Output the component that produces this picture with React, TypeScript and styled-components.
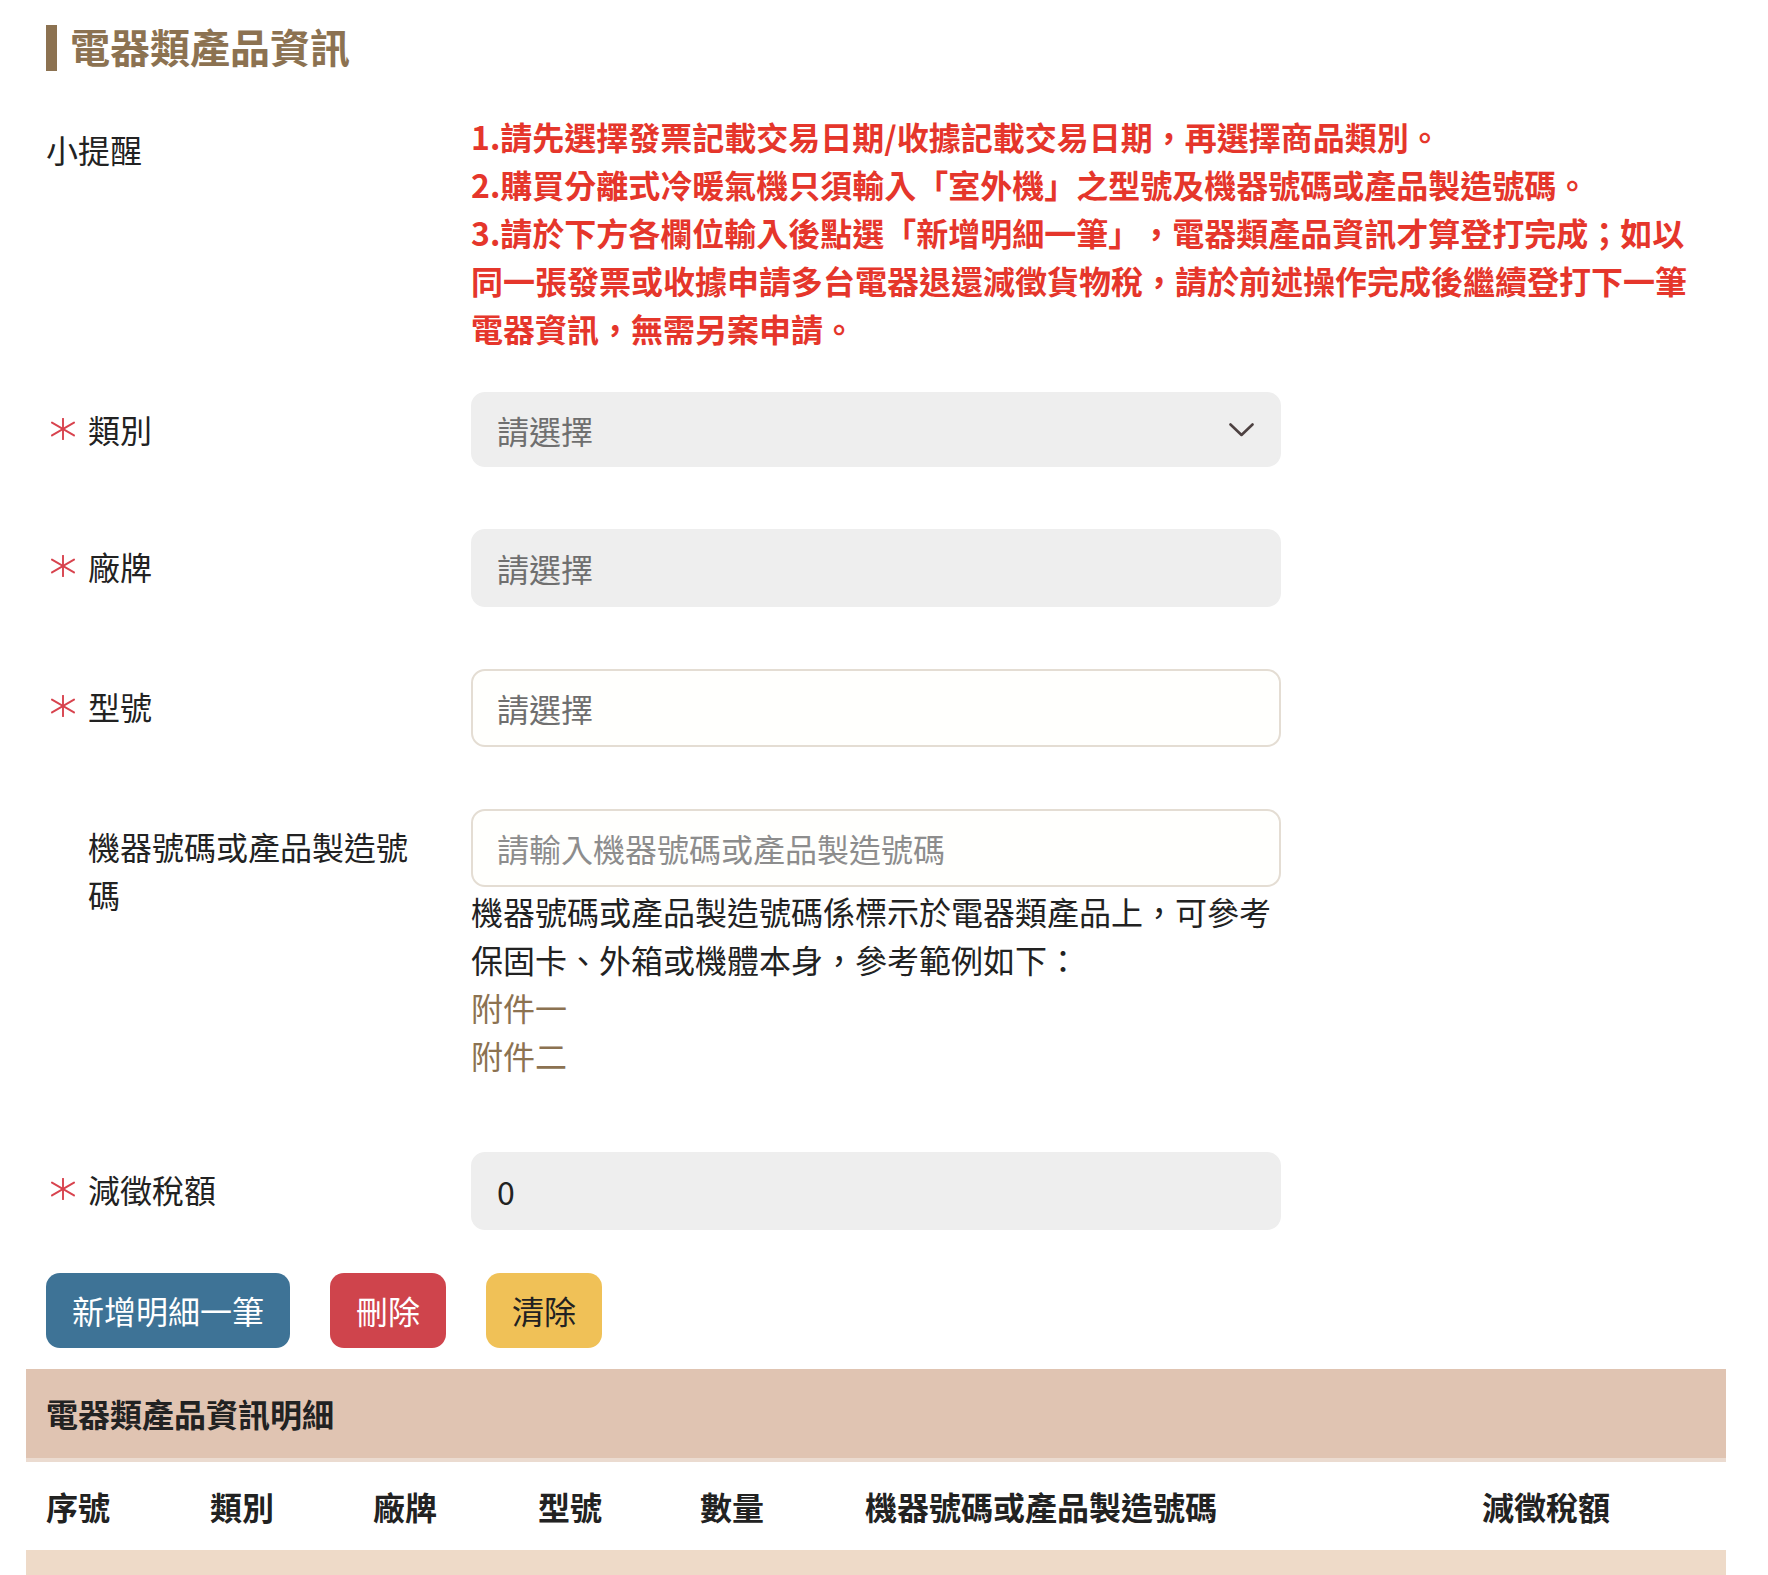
import React from "react";
import styled, { createGlobalStyle } from "styled-components";

const GlobalStyle = createGlobalStyle`
  html, body { margin: 0; padding: 0; background: #ffffff; }
  body {
    font-family: "Noto Sans CJK TC", "Noto Sans", sans-serif;
    color: #222222;
    text-spacing-trim: space-all;
  }
  *, *::before, *::after { box-sizing: border-box; }
`;

const BROWN = "#8c7251";

const Page = styled.div`
  padding: 25px 42px 0 26px;
`;

const FormArea = styled.div`
  padding-left: 20px;
`;

const Title = styled.h2`
  margin: 0;
  height: 46px;
  line-height: 42px;
  font-size: 40px;
  font-weight: 700;
  color: ${BROWN};
  border-left: 11px solid ${BROWN};
  padding-left: 13px;
`;

const Row = styled.div<{ $mt?: number; $mb?: number }>`
  display: grid;
  grid-template-columns: 425px 1fr;
  margin-top: ${(p) => p.$mt ?? 0}px;
  margin-bottom: ${(p) => p.$mb ?? 0}px;
`;

const Label = styled.div`
  display: flex;
  align-items: flex-start;
  padding-top: 13px;
  padding-right: 45px;
  font-size: 32px;
  line-height: 48px;
  color: #222222;
`;

const Marker = styled.span`
  flex: 0 0 42px;
  height: 48px;
  display: flex;
  align-items: center;
  padding-left: 5px;
`;

const Tips = styled.div`
  max-width: 1230px;
  color: #e5362b;
  font-weight: 700;
  font-size: 32px;
  line-height: 48px;
`;

const TipLine = styled.p`
  margin: 0;
`;

const FieldList = styled.div`
  display: flex;
  flex-direction: column;
  gap: 62px;
`;

const Field = styled.div`
  width: 810px;
`;

const inputBase = `
  width: 100%;
  border-radius: 14px;
  font-family: inherit;
  font-size: 32px;
  padding: 0 24px;
  outline: none;
  color: #222222;
`;

const TextInput = styled.input<{ $variant: "filled" | "outlined"; $hint?: string }>`
  ${inputBase}
  display: block;
  height: 78px;
  border: 2px solid ${(p) => (p.$variant === "filled" ? "#eeeeee" : "#e4ddd3")};
  background: ${(p) => (p.$variant === "filled" ? "#eeeeee" : "#fffffd")};
  &::placeholder {
    color: ${(p) => p.$hint ?? "#6f6f6f"};
    opacity: 1;
  }
`;

const SelectWrap = styled.div`
  position: relative;
  width: 100%;
`;

const Select = styled.select`
  ${inputBase}
  display: block;
  height: 75px;
  appearance: none;
  -webkit-appearance: none;
  border: 2px solid #eeeeee;
  background: #eeeeee;
  color: #6f6f6f;
  padding-right: 70px;
`;

const Chevron = styled.svg`
  position: absolute;
  right: 27px;
  top: 50%;
  transform: translateY(-50%);
  pointer-events: none;
`;

const Help = styled.div`
  padding-bottom: 11px;
  font-size: 32px;
  line-height: 48px;
  color: #222222;
`;

const HelpLink = styled.a`
  display: block;
  color: ${BROWN};
  text-decoration: none;
`;

const ButtonBar = styled.div`
  display: flex;
  gap: 40px;
  margin-top: 43px;
`;

const Button = styled.button<{ $tone: "blue" | "red" | "yellow" }>`
  height: 75px;
  padding: 0 26px;
  border: none;
  border-radius: 14px;
  font-family: inherit;
  font-size: 32px;
  line-height: 75px;
  cursor: pointer;
  background: ${(p) =>
    p.$tone === "blue" ? "#3e7396" : p.$tone === "red" ? "#cf444c" : "#f0c157"};
  color: ${(p) => (p.$tone === "yellow" ? "#222222" : "#ffffff")};
`;

const TableSection = styled.section`
  margin-top: 21px;
`;

const TableTitle = styled.div`
  height: 93px;
  padding-left: 20px;
  line-height: 89px;
  font-size: 32px;
  font-weight: 700;
  color: #222222;
  background: #e0c4b2;
  border-bottom: 4px solid #ebdbd0;
`;

const Table = styled.table`
  width: 100%;
  border-collapse: collapse;
  table-layout: fixed;
`;

const Th = styled.th`
  height: 88px;
  padding: 0 0 0 20px;
  text-align: left;
  font-size: 32px;
  font-weight: 700;
  color: #222222;
  background: #ffffff;
  white-space: nowrap;
`;

const Td = styled.td`
  height: 88px;
  background: #eedac8;
`;

const Asterisk = () => (
  <svg width="24" height="22" viewBox="0 0 24 22" aria-hidden="true">
    <g stroke="#d8434e" strokeWidth="1.9" strokeLinecap="round" fill="none">
      <line x1="12" y1="0.8" x2="12" y2="21.2" />
      <line x1="1" y1="4.6" x2="23" y2="17.4" />
      <line x1="1" y1="17.4" x2="23" y2="4.6" />
    </g>
  </svg>
);

const FieldLabel = ({ required, children }: { required?: boolean; children: React.ReactNode }) => (
  <Label>
    <Marker>{required ? <Asterisk /> : null}</Marker>
    <span>{children}</span>
  </Label>
);

const columns = [
  { title: "序號", width: 164 },
  { title: "類別", width: 163 },
  { title: "廠牌", width: 165 },
  { title: "型號", width: 162 },
  { title: "數量", width: 165 },
  { title: "機器號碼或產品製造號碼", width: 617 },
  { title: "減徵稅額", width: 264 },
];

export default function App() {
  return (
    <>
      <GlobalStyle />
      <Page>
        <FormArea>
          <Title>電器類產品資訊</Title>

          <Row $mt={41} $mb={40}>
            <Label>小提醒</Label>
            <Tips>
              <TipLine>1.請先選擇發票記載交易日期/收據記載交易日期，再選擇商品類別。</TipLine>
              <TipLine>2.購買分離式冷暖氣機只須輸入「室外機」之型號及機器號碼或產品製造號碼。</TipLine>
              <TipLine>
                3.請於下方各欄位輸入後點選「新增明細一筆」，電器類產品資訊才算登打完成；如以同一張發票或收據申請多台電器退還減徵貨物稅，請於前述操作完成後繼續登打下一筆電器資訊，無需另案申請。
              </TipLine>
            </Tips>
          </Row>

          <FieldList>
            <Row>
              <FieldLabel required>類別</FieldLabel>
              <Field>
                <SelectWrap>
                  <Select defaultValue="">
                    <option value="">請選擇</option>
                  </Select>
                  <Chevron width="25" height="14" viewBox="0 0 25 14" aria-hidden="true">
                    <polyline
                      points="1.5,1.5 12.5,12 23.5,1.5"
                      fill="none"
                      stroke="#4d4141"
                      strokeWidth="2.6"
                      strokeLinecap="round"
                      strokeLinejoin="round"
                    />
                  </Chevron>
                </SelectWrap>
              </Field>
            </Row>

            <Row>
              <FieldLabel required>廠牌</FieldLabel>
              <Field>
                <TextInput $variant="filled" readOnly placeholder="請選擇" />
              </Field>
            </Row>

            <Row>
              <FieldLabel required>型號</FieldLabel>
              <Field>
                <TextInput $variant="outlined" placeholder="請選擇" />
              </Field>
            </Row>

            <Row>
              <FieldLabel>機器號碼或產品製造號碼</FieldLabel>
              <Field>
                <TextInput $variant="outlined" $hint="#8d8d8d" placeholder="請輸入機器號碼或產品製造號碼" />
                <Help>
                  機器號碼或產品製造號碼係標示於電器類產品上，可參考保固卡、外箱或機體本身，參考範例如下：
                  <HelpLink href="#">附件一</HelpLink>
                  <HelpLink href="#">附件二</HelpLink>
                </Help>
              </Field>
            </Row>

            <Row>
              <FieldLabel required>減徵稅額</FieldLabel>
              <Field>
                <TextInput $variant="filled" readOnly value="0" />
              </Field>
            </Row>
          </FieldList>

          <ButtonBar>
            <Button $tone="blue">新增明細一筆</Button>
            <Button $tone="red">刪除</Button>
            <Button $tone="yellow">清除</Button>
          </ButtonBar>
        </FormArea>

        <TableSection>
          <TableTitle>電器類產品資訊明細</TableTitle>
          <Table>
            <colgroup>
              {columns.map((c) => (
                <col key={c.title} style={{ width: c.width }} />
              ))}
            </colgroup>
            <thead>
              <tr>
                {columns.map((c) => (
                  <Th key={c.title}>{c.title}</Th>
                ))}
              </tr>
            </thead>
            <tbody>
              <tr>
                {columns.map((c) => (
                  <Td key={c.title} />
                ))}
              </tr>
            </tbody>
          </Table>
        </TableSection>
      </Page>
    </>
  );
}
